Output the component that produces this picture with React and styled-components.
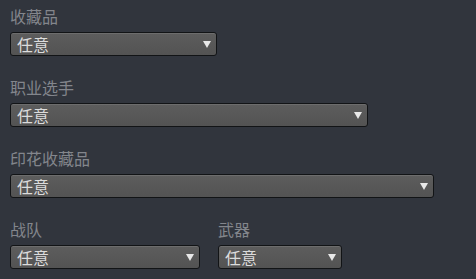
import React from "react";
import styled, { createGlobalStyle } from "styled-components";

const Global = createGlobalStyle`
  html, body { margin: 0; padding: 0; background: #31353d; }
  body { font-family: "Noto Sans CJK SC", "Noto Sans", sans-serif; }
`;

const Page = styled.div`
  display: flex;
  flex-direction: column;
  gap: 21px;
  padding: 6px 10px;
  width: 476px;
  height: 279px;
  box-sizing: border-box;
  background: #31353d;
`;

const Row = styled.div`
  display: flex;
  gap: 18px;
`;

const Field = styled.div`
  display: flex;
  flex-direction: column;
  gap: 6px;
  width: ${(p) => p.w}px;
`;

const Label = styled.div`
  color: #83868c;
  font-size: 16px;
  line-height: 20px;
  height: 20px;
`;

const Select = styled.div`
  display: flex;
  align-items: center;
  justify-content: space-between;
  height: 24px;
  box-sizing: border-box;
  padding: 0 5px 0 6px;
  border: 1px solid #121416;
  border-radius: 3px;
  background: linear-gradient(#5d5d5d, #535353);
  box-shadow: inset 0 1px 0 rgba(255, 255, 255, 0.1);
  color: #dcdcdc;
  font-size: 16px;
  line-height: 22px;
`;

const Arrow = styled.span`
  width: 0;
  height: 0;
  margin-top: 1px;
  border-left: 4px solid transparent;
  border-right: 4px solid transparent;
  border-top: 7px solid #e8e8e8;
`;

const Drop = ({ label, w }) => (
  <Field w={w}>
    <Label>{label}</Label>
    <Select>
      <span>任意</span>
      <Arrow />
    </Select>
  </Field>
);

export default function App() {
  return (
    <>
      <Global />
      <Page>
        <Drop label="收藏品" w={207} />
        <Drop label="职业选手" w={358} />
        <Drop label="印花收藏品" w={424} />
        <Row>
          <Drop label="战队" w={190} />
          <Drop label="武器" w={124} />
        </Row>
      </Page>
    </>
  );
}
